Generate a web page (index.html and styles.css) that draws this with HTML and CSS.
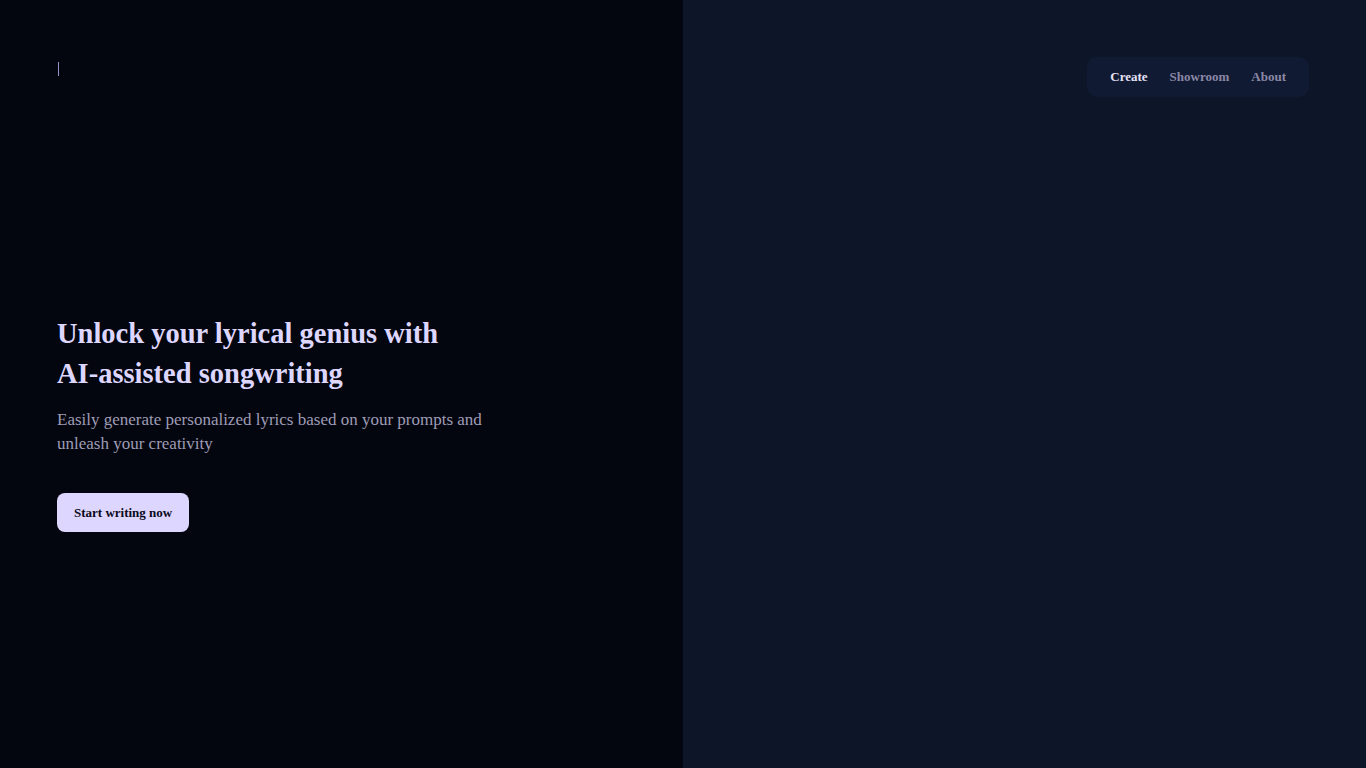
FILE: index.html
```html
<!DOCTYPE html>
<html lang="en">
<head>
    <meta charset="UTF-8">
    <meta name="viewport" content="width=device-width, initial-scale=1.0">
    <title>Lyricist | AI songwriting</title>
    <link rel="stylesheet" href="styles.css">
</head>
<body>

    <div class="page">
        <div class="left-panel">
            <div class="header">
                <span class="caret"></span>
            </div>

            <div class="hero">
                <h1>Unlock your lyrical genius with AI-assisted songwriting</h1>
                <p>Easily generate personalized lyrics based on your prompts and unleash your creativity</p>
                <button class="btn">Start writing now</button>
            </div>
        </div>

        <div class="right-panel">
            <div class="navbar">
                <a class="nav-link active" href="#">Create</a>
                <a class="nav-link" href="#">Showroom</a>
                <a class="nav-link" href="#">About</a>
            </div>
        </div>
    </div>

</body>
</html>
```

FILE: styles.css
```css
body {
    font-family: "Liberation Serif", "Times New Roman", serif;
    margin: 0;
    padding: 0;
    background: #04060f;
}

.page {
    display: grid;
    grid-template-columns: 683px 1fr;
    min-height: 100vh;
}

.left-panel {
    background: #04060f;
    padding: 57px;
    display: flex;
    flex-direction: column;
}

.header {
    height: 20px;
    padding-top: 5px;
}

.caret {
    display: block;
    width: 1px;
    height: 14px;
    margin-left: 1px;
    background: #9693c8;
}

.hero {
    max-width: 448px;
    margin-top: 232px;
}

.hero h1 {
    max-width: 400px;
    margin: 0;
    font-size: 28.5px;
    line-height: 40px;
    font-weight: bold;
    color: #ddd6fe;
}

.hero p {
    margin: 14px 0 0;
    font-size: 17px;
    line-height: 24px;
    color: #9e9cb6;
}

.btn {
    margin-top: 37px;
    height: 39px;
    padding: 0 17px;
    border: none;
    border-radius: 8px;
    background: #ddd6fe;
    color: #0b0a1a;
    font-family: inherit;
    font-size: 13px;
    font-weight: bold;
    cursor: pointer;
}

.right-panel {
    background: #0d1528;
    padding: 57px;
    display: flex;
    justify-content: flex-end;
    align-items: flex-start;
}

.navbar {
    display: flex;
    align-items: center;
    height: 40px;
    padding: 0 12px;
    border-radius: 10px;
    background: #111a33;
}

.nav-link {
    padding: 0 11px;
    font-size: 13px;
    font-weight: bold;
    color: #8b88a6;
    text-decoration: none;
}

.nav-link.active {
    color: #e4e1f5;
}
```
